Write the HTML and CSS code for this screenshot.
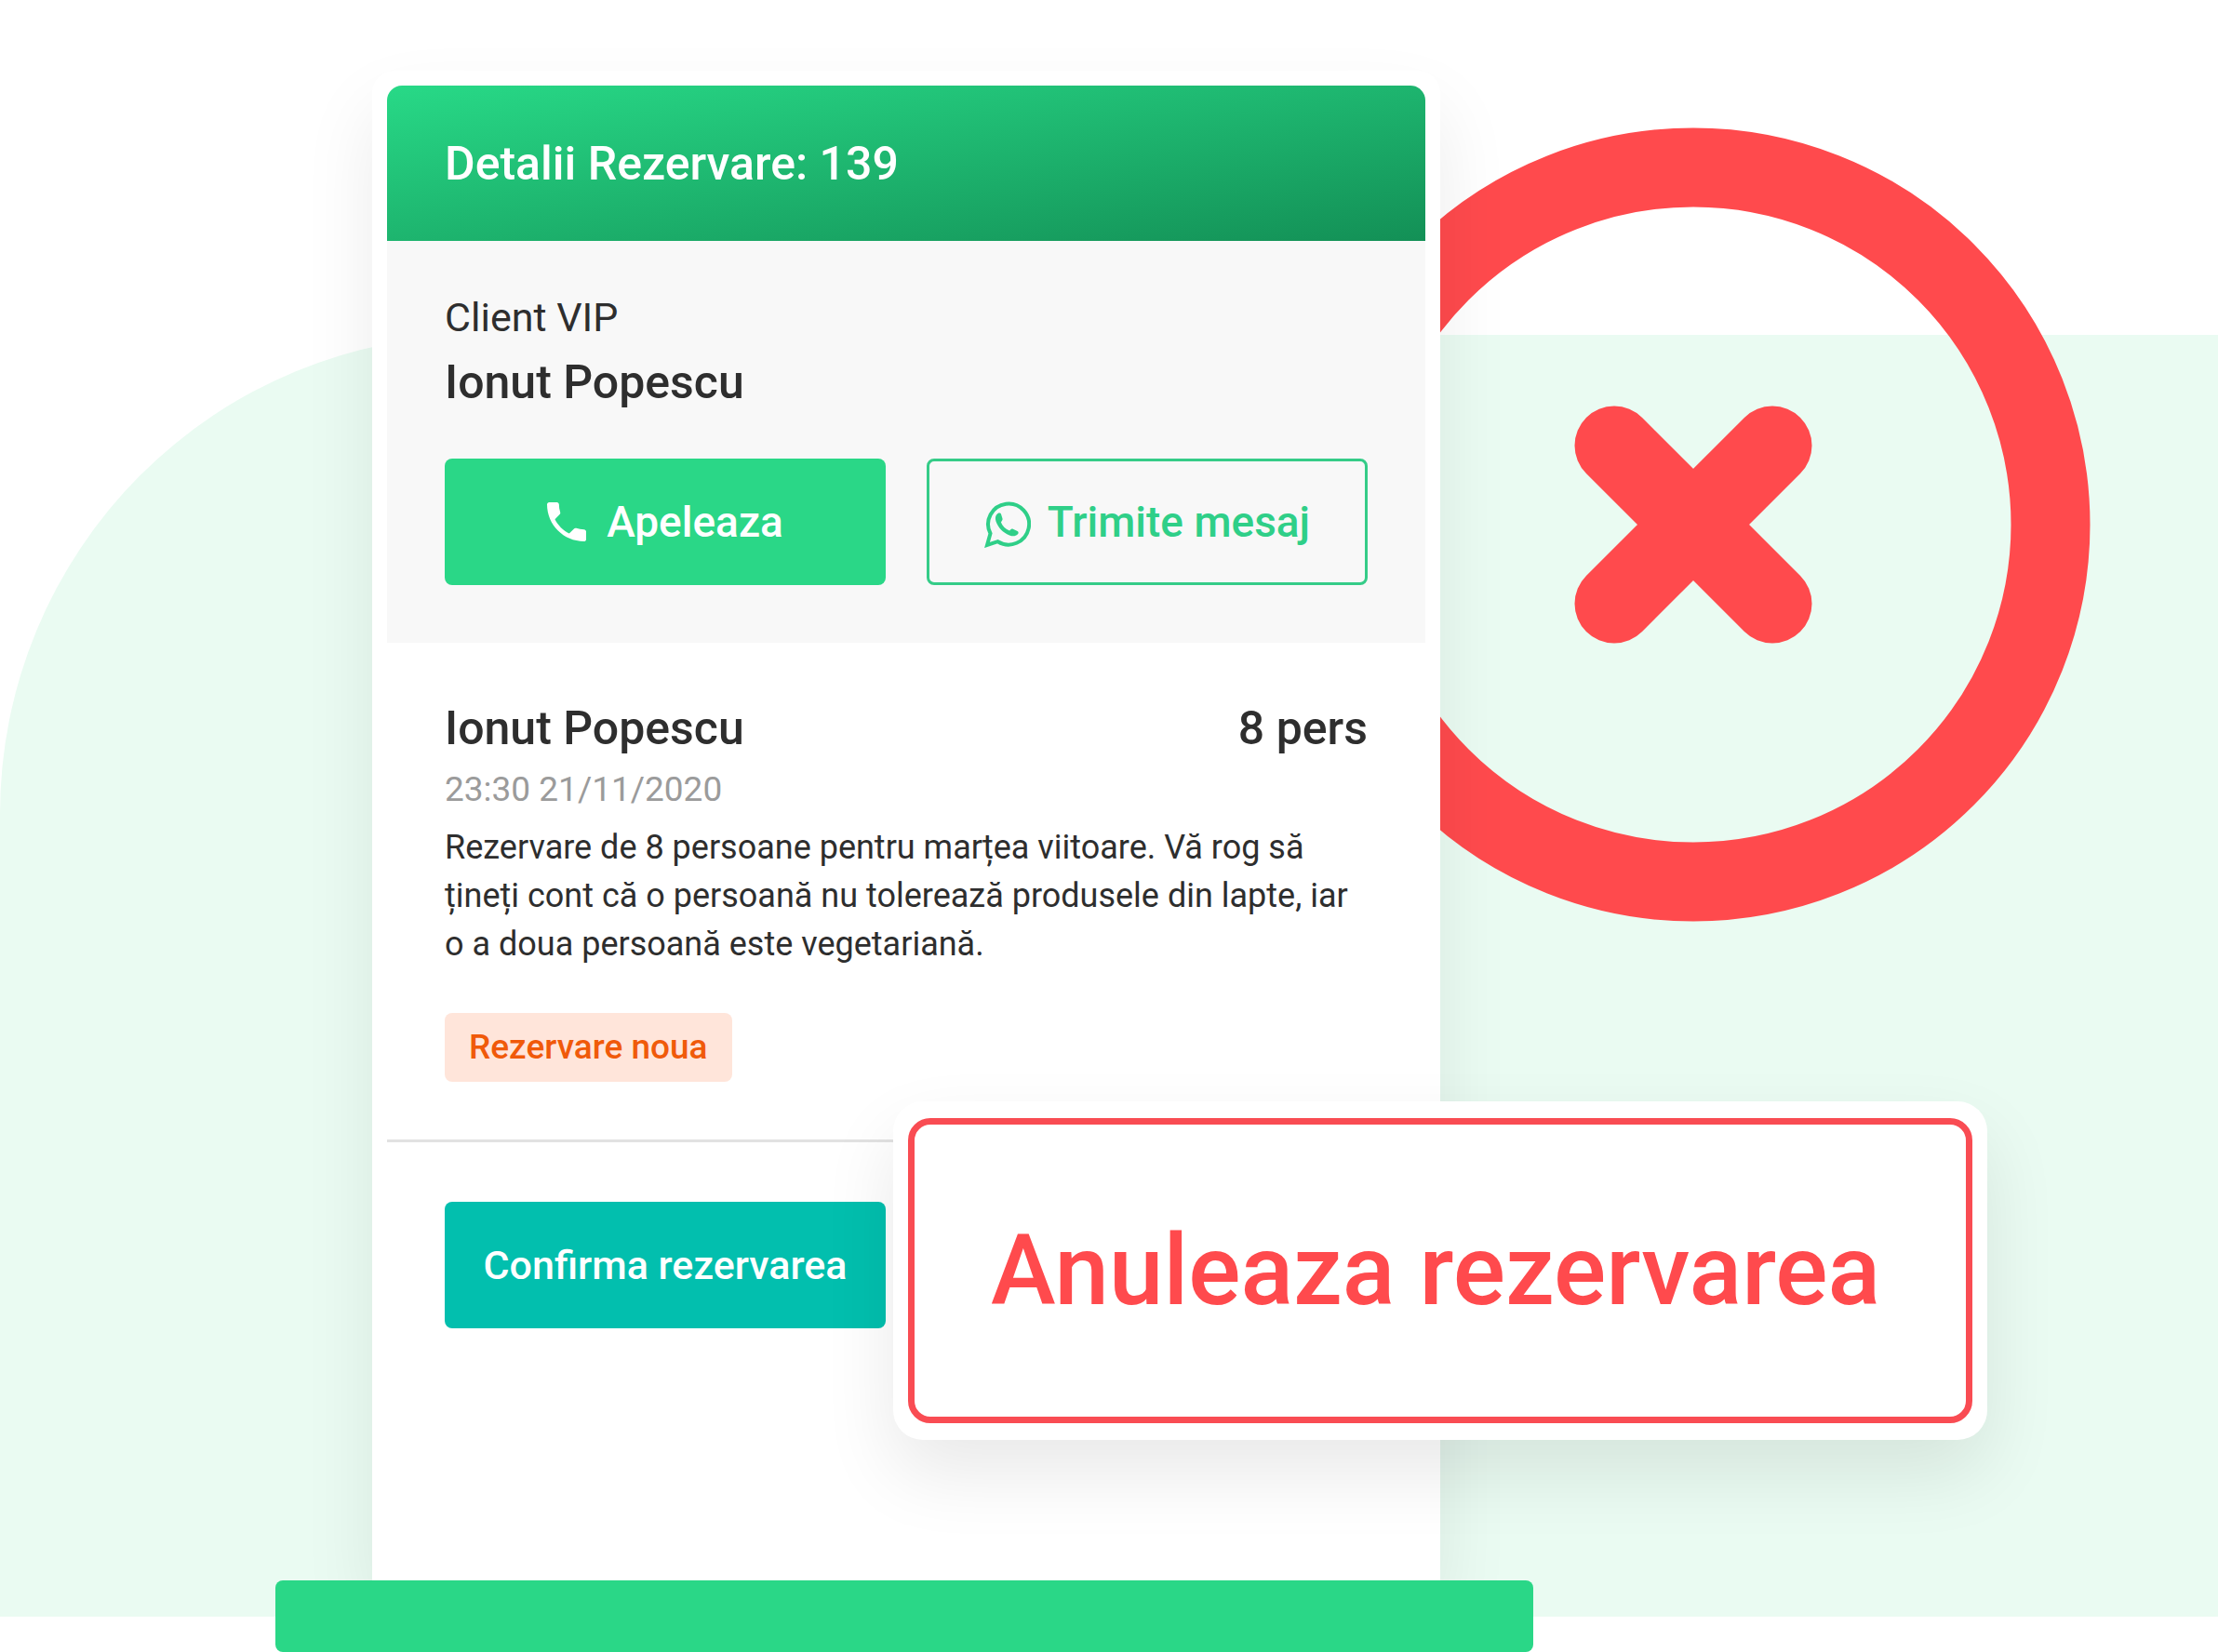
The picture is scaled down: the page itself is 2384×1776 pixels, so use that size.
FILE: index.html
```html
<!DOCTYPE html>
<html lang="ro">
<head>
  <meta charset="UTF-8" />
  <meta name="viewport" content="width=device-width, initial-scale=1.0"/>
  <title>Detalii Rezervare</title>
  <link rel="stylesheet" href="styles.css">
</head>
<body>
  <div class="scene">
    <div class="backdrop"></div>

    <div class="stage">
      <!-- Cancel badge behind the card -->
      <svg class="cancel-badge" viewBox="0 0 854 854" aria-hidden="true">
        <circle cx="427" cy="427" r="384" fill="none" stroke="#ff4a4d" stroke-width="85"/>
        <path d="M342 342 L512 512 M512 342 L342 512" stroke="#ff4a4d" stroke-width="85" stroke-linecap="round"/>
      </svg>

      <main class="booking-card">
        <header class="card-header">
          <h1>Detalii Rezervare: 139</h1>
        </header>

        <section class="client-section">
          <p class="client-type">Client VIP</p>
          <h2>Ionut Popescu</h2>
          <div class="button-row">
            <button type="button" class="btn call-btn">
              <svg class="call-icon" viewBox="3 3 18 18" aria-hidden="true">
                <path fill="currentColor" d="M6.620 10.790c1.440 2.830 3.760 5.140 6.590 6.590l2.200-2.200c.27-.27.67-.36 1.020-.24 1.120.37 2.330.57 3.570.57.550 0 1 .45 1 1V20c0 .55-.45 1-1 1-9.390 0-17-7.610-17-17 0-.55.45-1 1-1h3.500c.55 0 1 .45 1 1 0 1.250.2 2.450.57 3.570.11.35.03.74-.25 1.020l-2.200 2.200z"/>
              </svg>
              Apeleaza
            </button>
            <button type="button" class="btn message-btn">
              <svg class="message-icon" viewBox="0 0 50 50" aria-hidden="true">
                <path fill="none" stroke="currentColor" stroke-width="4" d="M3 47 L6.500 34.500 A22 22 0 1 1 14.500 43.200 Z"/>
                <path fill="currentColor" d="M14.500 13c1.500-.8 3.200-.4 3.600 1l1.400 4.600c.3 1.100-.1 1.900-1.600 3.900 1.800 4.200 4.800 7.200 9.200 9 1.800-1.900 2.700-2.200 3.700-1.800l4.800 2.200c1.500.8 1.300 2.600.1 3.700-2.100 2-5.200 2.300-8.700.8-7.200-3-12-7.900-14.500-14.900-1.200-3.500-.5-6.800 2-8.500z"/>
              </svg>
              Trimite mesaj
            </button>
          </div>
        </section>

        <section class="details-section">
          <div class="details-title">
            <h2>Ionut Popescu</h2>
            <span class="persons">8 pers</span>
          </div>
          <time class="date" datetime="2020-11-21T23:30">23:30 21/11/2020</time>
          <p class="note">Rezervare de 8 persoane pentru marțea viitoare. Vă rog să țineți cont că o persoană nu tolerează produsele din lapte, iar o a doua persoană este vegetariană.</p>
          <span class="tag">Rezervare noua</span>
        </section>

        <section class="actions-section">
          <div class="button-row">
            <button type="button" class="btn confirm-btn">Confirma rezervarea</button>
          </div>
          <!-- Enlarged cancel button, over the card edge -->
          <div class="cancel-callout">
            <button type="button" class="cancel-btn">Anuleaza rezervarea</button>
          </div>
        </section>
      </main>

      <div class="base"></div>
    </div>
  </div>
</body>
</html>
```
FILE: styles.css
```css
* {
  box-sizing: border-box;
}

body {
  font-family: Roboto, 'Liberation Sans', sans-serif;
  margin: 0;
  background-color: #fff;
  color: #2e2e2e;
}

h1, h2, p {
  margin: 0;
}

h1, h2, .persons {
  font-size: 50px;
  font-weight: 500;
  line-height: 80px;
}

.scene {
  position: relative;
  display: grid;
  grid-template-columns: 296fr 1352fr 736fr;
  min-height: 100vh;
  padding-top: 76px;
  overflow: hidden;
}

.backdrop {
  position: absolute;
  top: 360px;
  left: 0;
  right: 0;
  bottom: 38px;
  background-color: #eafbf2;
  border-top-left-radius: 515px;
}

.stage {
  position: relative;
  grid-column: 2;
  display: flex;
  flex-direction: column;
}

.cancel-badge {
  position: absolute;
  top: 61px;
  right: -599px;
  width: 854px;
  height: 854px;
}

.booking-card {
  position: relative;
  flex: 1;
  margin: 0 100px 0 104px;
  padding: 16px 16px 0;
  background-color: #fff;
  border-radius: 24px 24px 0 0;
  box-shadow: 0 40px 80px rgba(0, 0, 0, 0.08);
}

.card-header {
  display: flex;
  align-items: center;
  height: 167px;
  padding: 0 62px;
  color: #fff;
  background: linear-gradient(to bottom right, #28d987, #139056);
  border-radius: 16px 16px 0 0;
}

.client-section {
  padding: 52px 62px 62px;
  background-color: #f8f8f8;
}

.client-type {
  font-size: 43px;
  line-height: 60px;
}

.button-row {
  display: grid;
  grid-template-columns: 1fr 1fr;
  gap: 44px;
}

.client-section .button-row {
  margin-top: 42px;
}

.btn {
  display: flex;
  align-items: center;
  justify-content: center;
  gap: 22px;
  height: 136px;
  padding: 0;
  border: none;
  border-radius: 8px;
  font-family: inherit;
  font-size: 46px;
  font-weight: 500;
  color: #fff;
  cursor: pointer;
}

.call-btn {
  background-color: #2ad787;
}

.call-icon {
  width: 42px;
  height: 42px;
}

.message-btn {
  gap: 18px;
  border: 3px solid #35cc88;
  background-color: transparent;
  color: #2fcf88;
}

.message-icon {
  width: 50px;
  height: 50px;
  margin-top: 6px;
}

.details-section {
  padding: 52px 62px 62px;
  border-bottom: 3px solid #e2e2e2;
}

.details-title {
  display: flex;
  justify-content: space-between;
}

.date {
  display: block;
  font-size: 37px;
  line-height: 52px;
  color: #9b9b9b;
}

.note {
  margin-top: 10px;
  font-size: 36px;
  line-height: 52px;
}

.tag {
  display: inline-block;
  margin-top: 48px;
  padding: 0 26px;
  border-radius: 8px;
  background-color: #ffe5da;
  color: #f05a0a;
  font-size: 37px;
  font-weight: 500;
  line-height: 74px;
  vertical-align: top;
}

.actions-section {
  position: relative;
  padding: 64px 62px;
}

.confirm-btn {
  background-color: #02bfae;
  font-size: 43px;
}

.cancel-callout {
  position: absolute;
  top: -44px;
  left: 544px;
  right: -604px;
  padding: 18px 16px;
  border-radius: 32px;
  background-color: #fff;
  box-shadow: 0 36px 80px rgba(0, 0, 0, 0.09);
}

.cancel-btn {
  display: block;
  width: 100%;
  height: 328px;
  padding: 0 10px 0 0;
  border: 7px solid #f94c53;
  border-radius: 24px;
  background-color: #fff;
  color: #ff4a4d;
  font-family: inherit;
  font-size: 105px;
  font-weight: 500;
  cursor: pointer;
}

.base {
  position: relative;
  height: 77px;
  background-color: #2ad787;
  border-radius: 8px;
}
```
